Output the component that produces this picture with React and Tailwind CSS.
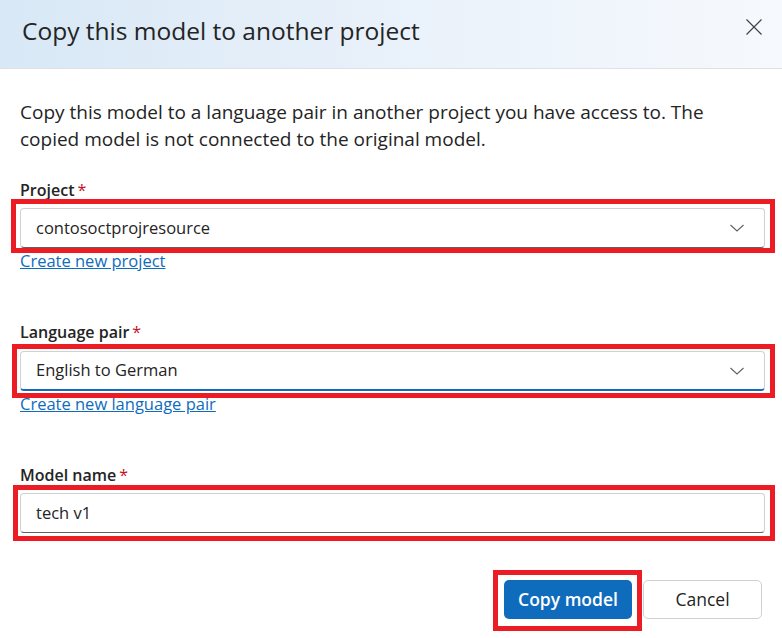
import React from 'react'

const FONT = { fontFamily: '"Segoe UI", "Open Sans", "Noto Sans", sans-serif' }

function Chevron() {
  return (
    <svg width="16" height="16" viewBox="0 0 16 16" fill="none" className="shrink-0">
      <path d="M1.5 5 L8 11 L14.5 5" stroke="#616161" strokeWidth="1.1" />
    </svg>
  )
}

function Label({ children }) {
  return (
    <div className="h-[24px] leading-[24px] text-[16px] font-semibold text-[#242424]">
      {children}
      <span className="ml-[3px] text-[#c50f1f] font-normal">*</span>
    </div>
  )
}

function Callout({ className }) {
  return <span className={`pointer-events-none absolute border-[5px] border-[#ec1c24] ${className}`} />
}

export default function App() {
  return (
    <div className="w-[782px] h-[638px] bg-white overflow-hidden" style={FONT}>
      {/* Header */}
      <div className="h-[69px] flex items-center justify-between pl-[22px] pr-[12px] border-b border-[#e1e1e1] bg-gradient-to-r from-[#d8e8f6] via-[#e9f1fa] to-[#f6f9fd]">
        <h1 className="text-[24.5px] font-medium text-[#242424] -mt-[6px]">Copy this model to another project</h1>
        <button className="w-[32px] h-[32px] flex items-center justify-center -mt-[14px]">
          <svg width="18" height="18" viewBox="0 0 18 18">
            <path d="M1.5 1.5 L16.5 16.5 M16.5 1.5 L1.5 16.5" stroke="#424242" strokeWidth="1.2" />
          </svg>
        </button>
      </div>

      {/* Body */}
      <div className="pl-[20px] pr-[17px]">
        <p className="mt-[30px] text-[19px] leading-[27px] text-[#242424]">
          Copy this model to a language pair in another project you have access to. The copied model is not connected to the original model.
        </p>

        {/* Project */}
        <div className="mt-[25px]">
          <Label>Project</Label>
          <div className="relative mt-[6px]">
            <div className="h-[40px] flex items-center justify-between pl-[15px] pr-[19px] rounded-[4px] border border-[#d1d1d1] border-b-[#616161] text-[16.5px] text-[#242424]">
              <span>contosoctprojresource</span>
              <Chevron />
            </div>
            <Callout className="-left-[9px] -right-[10px] -top-[9px] -bottom-[5px]" />
          </div>
          <a href="#" className="block w-max mt-[2px] h-[22px] leading-[22px] text-[16.5px] text-[#0f6cbd] underline">Create new project</a>
        </div>

        {/* Language pair */}
        <div className="mt-[48px]">
          <Label>Language pair</Label>
          <div className="relative mt-[7px]">
            <div className="h-[40px] flex items-center justify-between pl-[15px] pr-[19px] rounded-[4px] border border-[#d1d1d1] border-b-2 border-b-[#0f6cbd] text-[16.5px] text-[#242424]">
              <span>English to German</span>
              <Chevron />
            </div>
            <Callout className="-left-[8px] -right-[10px] -top-[7px] -bottom-[7px]" />
          </div>
          <a href="#" className="block w-max mt-[2px] h-[22px] leading-[22px] text-[16.5px] text-[#0f6cbd] underline">Create new language pair</a>
        </div>

        {/* Model name */}
        <div className="mt-[48px]">
          <Label>Model name</Label>
          <div className="relative mt-[6px]">
            <div className="h-[40px] flex items-center pl-[15px] pr-[19px] rounded-[4px] border border-[#d1d1d1] border-b-[#616161] text-[16.5px] text-[#242424]">
              <span>tech v1</span>
            </div>
            <Callout className="-left-[7px] -right-[10px] -top-[8px] -bottom-[8px]" />
          </div>
        </div>

        {/* Actions */}
        <div className="mt-[47px] flex justify-end gap-[11px] pr-[3px]">
          <div className="relative">
            <button className="w-[128px] h-[39px] rounded-[5px] bg-[#0f6cbd] text-white text-[17.5px] font-semibold">Copy model</button>
            <Callout className="-left-[11px] -right-[10px] -top-[10px] -bottom-[12px]" />
          </div>
          <button className="w-[119px] h-[39px] rounded-[5px] border border-[#d1d1d1] bg-white text-[#242424] text-[17.5px]">Cancel</button>
        </div>
      </div>
    </div>
  )
}
